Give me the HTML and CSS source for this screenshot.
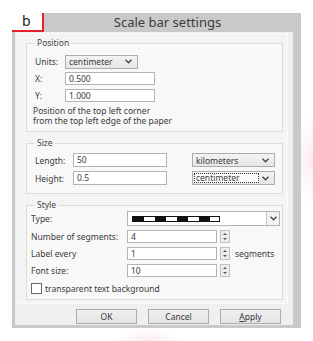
FILE: index.html
```html
<!DOCTYPE html>
<html lang="en">
<head>
    <meta charset="UTF-8">
    <meta name="viewport" content="width=device-width, initial-scale=1.0">
    <title>Scale bar settings</title>
    <link rel="stylesheet" href="styles.css">
</head>
<body>
    <div class="dialog">
        <div class="titlebar">
            <div class="tag">b</div>
            <div class="title">Scale bar settings</div>
        </div>

        <div class="client">
            <div class="panel">
                <fieldset class="group pos">
                    <legend>Position</legend>
                    <div class="grid">
                        <label>Units:</label>
                        <div class="combo units"><span>centimeter</span><svg viewBox="0 0 7 5"><path d="M0.5 0.8 L3.5 3.8 L6.5 0.8"/></svg></div>
                        <label>X:</label>
                        <div class="field w90">0.500</div>
                        <label>Y:</label>
                        <div class="field w90">1.000</div>
                    </div>
                    <p class="note">Position of the top left corner<br>from the top left edge of the paper</p>
                </fieldset>

                <fieldset class="group size">
                    <legend>Size</legend>
                    <div class="grid">
                        <label>Length:</label>
                        <div class="field w94">50</div>
                        <div class="combo unit"><span>kilometers</span><svg viewBox="0 0 7 5"><path d="M0.5 0.8 L3.5 3.8 L6.5 0.8"/></svg></div>
                        <label>Height:</label>
                        <div class="field w94">0.5</div>
                        <div class="combo unit focus"><span>centimeter</span><svg viewBox="0 0 7 5"><path d="M0.5 0.8 L3.5 3.8 L6.5 0.8"/></svg></div>
                    </div>
                </fieldset>

                <fieldset class="group style">
                    <legend>Style</legend>
                    <div class="grid">
                        <label>Type:</label>
                        <div class="type">
                            <div class="bar"></div>
                            <div class="drop"><svg viewBox="0 0 7 5"><path d="M0.5 0.8 L3.5 3.8 L6.5 0.8"/></svg></div>
                        </div>

                        <label>Number of segments:</label>
                        <div class="spinrow">
                            <div class="field w90">4</div>
                            <div class="spin"><i class="up"></i><i class="down"></i></div>
                        </div>

                        <label>Label every</label>
                        <div class="spinrow">
                            <div class="field w90">1</div>
                            <div class="spin"><i class="up"></i><i class="down"></i></div>
                            <span class="after">segments</span>
                        </div>

                        <label>Font size:</label>
                        <div class="spinrow">
                            <div class="field w90">10</div>
                            <div class="spin"><i class="up"></i><i class="down"></i></div>
                        </div>
                    </div>
                    <div class="check"><span class="box"></span>transparent text background</div>
                </fieldset>
            </div>

            <div class="buttons">
                <div class="btn">OK</div>
                <div class="btn">Cancel</div>
                <div class="btn"><u>A</u>pply</div>
            </div>
        </div>
    </div>
</body>
</html>
```

FILE: styles.css
```css
* {
    box-sizing: border-box;
}
body {
    margin: 0;
    padding: 13px 0 0 12px;
    font-family: "Noto Sans", "Open Sans", sans-serif;
    font-size: 8.5px;
    color: #3a3a3a;
    background:
        radial-gradient(ellipse 22px 45px at 313px 160px, rgba(248, 222, 222, 0.55), transparent),
        radial-gradient(ellipse 30px 14px at 148px 341px, rgba(248, 226, 226, 0.6), transparent),
        #fff;
    height: 341px;
}
.dialog {
    width: 289px;
    height: 315px;
    background: #c9c9c9;
    display: flex;
    flex-direction: column;
}
.titlebar {
    height: 19px;
    display: flex;
}
.tag {
    width: 32px;
    background: #fff;
    border-right: 2px solid #e3202c;
    border-bottom: 2px solid #e3202c;
    font-size: 14px;
    line-height: 16px;
    padding-left: 10px;
    color: #222;
}
.title {
    flex: 1;
    text-align: center;
    font-size: 13px;
    line-height: 19px;
    color: #3c3c3c;
    padding-right: 10px;
}
.client {
    flex: 1;
    margin: 0 8px 3px 3px;
    background: #efefef;
    padding: 1px 5px 0 2px;
}
.panel {
    border: 1px solid #fbfbfb;
    background: #f4f4f4;
    padding: 3px 4px 3px 8px;
}
.group {
    margin: 0 0 5px;
    padding: 6px 8px 5px;
    border: 1px solid #dcdcdc;
    background: #f8f8f8;
    min-width: 0;
}
.group legend {
    padding: 0 2px;
    line-height: 12px;
    color: #444;
}
.grid {
    display: grid;
    align-items: center;
}
.pos .grid {
    grid-template-columns: 30px auto;
    grid-auto-rows: 13px;
    row-gap: 4px;
    justify-items: start;
}
.note {
    margin: 4px 0 0 -2px;
    line-height: 10px;
}
.size {
    padding: 4px 8px 8px;
}
.size .grid {
    grid-template-columns: 38px 94px 83px;
    grid-auto-rows: 14px;
    row-gap: 4px;
    column-gap: 25px;
    column-gap: 0;
}
.size .combo {
    margin-left: 25px;
}
.style {
    margin-bottom: 0;
    padding: 0 4px 4px;
}
.style legend {
    margin-left: 4px;
}
.style .grid {
    grid-template-columns: 96px auto;
    grid-template-rows: 15px 13px 13px 13px;
    row-gap: 4px;
    justify-items: start;
}
.field {
    height: 13px;
    background: #fff;
    border: 1px solid #b4b4b4;
    padding-left: 3px;
    line-height: 11px;
}
.size .field {
    height: 14px;
    line-height: 12px;
}
.w90 {
    width: 90px;
}
.w94 {
    width: 94px;
}
.combo {
    height: 14px;
    display: flex;
    align-items: center;
    justify-content: space-between;
    border: 1px solid #adadad;
    background: linear-gradient(#f3f3f3, #e6e6e6);
    padding: 0 5px 0 3px;
}
.combo svg,
.drop svg {
    width: 7px;
    height: 5px;
    fill: none;
    stroke: #444;
    stroke-width: 1.3;
}
.units {
    width: 73px;
}
.unit {
    width: 83px;
}
.focus {
    padding-left: 1px;
}
.focus span {
    width: 65px;
    height: 10px;
    line-height: 8px;
    padding-left: 1px;
    border: 1px dotted #333;
    background: #fdfdfd;
}
.type {
    width: 153px;
    height: 15px;
    background: #fff;
    border: 1px solid #b4b4b4;
    display: flex;
    align-items: center;
    justify-content: space-between;
    padding-left: 4px;
}
.bar {
    width: 88px;
    height: 6px;
    border: 1px solid #111;
    background: linear-gradient(90deg, #111 50%, #fff 50%) 0 0 / 22px 100%;
}
.drop {
    width: 13px;
    height: 13px;
    border-left: 1px solid #c4c4c4;
    background: #f2f2f2;
    display: flex;
    align-items: center;
    justify-content: center;
}
.spinrow {
    display: flex;
    align-items: center;
}
.spin {
    width: 10px;
    height: 13px;
    margin-left: 3px;
    border: 1px solid #c2c2c2;
    background: #ededed;
    display: flex;
    flex-direction: column;
    align-items: center;
    justify-content: space-around;
}
.spin i {
    width: 0;
    height: 0;
    border-left: 2px solid transparent;
    border-right: 2px solid transparent;
}
.spin .up {
    border-bottom: 2px solid #555;
}
.spin .down {
    border-top: 2px solid #555;
}
.after {
    margin-left: 5px;
}
.check {
    display: flex;
    align-items: center;
    margin-top: 5px;
    height: 13px;
}
.check .box {
    width: 11px;
    height: 11px;
    border: 1px solid #6a6a6a;
    background: #fff;
    margin-right: 3px;
}
.buttons {
    display: flex;
    justify-content: flex-end;
    gap: 11px;
    margin-top: 5px;
    padding-right: 7px;
}
.btn {
    width: 61px;
    height: 15px;
    border: 1px solid #adadad;
    background: linear-gradient(#f0f0f0, #e3e3e3);
    text-align: center;
    line-height: 13px;
}
```
